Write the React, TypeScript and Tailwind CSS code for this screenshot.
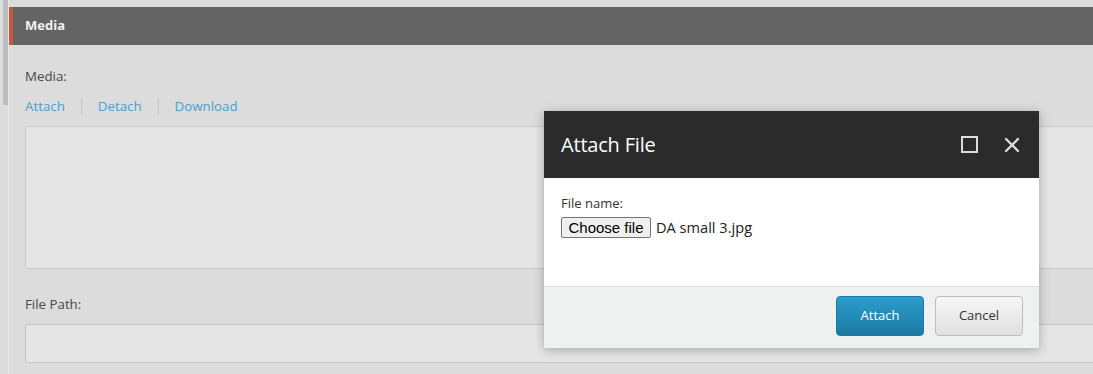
import { X } from 'lucide-react'

const FONT = '[font-family:"Open_Sans",Roboto,sans-serif]'

function Modal() {
  return (
    <div className={`absolute left-[544px] top-[111px] w-[495px] h-[237px] flex flex-col bg-white shadow-[0_2px_10px_rgba(0,0,0,0.28)] ${FONT}`}>
      {/* title bar */}
      <div className="h-[67px] shrink-0 flex items-center justify-between bg-[#2b2b2b] pl-[17px] pr-[18px]">
        <div className="text-[20px] leading-none text-white tracking-[-0.2px]">Attach File</div>
        <div className="flex items-center gap-[22px]">
          <div className="w-[17px] h-[17px] border-2 border-[#dcdcdc]" />
          <X size={24} strokeWidth={2.3} className="text-[#dcdcdc] -mr-[3px]" />
        </div>
      </div>

      {/* body */}
      <div className="flex-1 px-[17px] pt-[16px]">
        <div className="text-[13px] leading-[18px] text-[#333]">File name:</div>
        <div className="flex items-center mt-[5px]">
          <button className="h-[21px] w-[90px] rounded-[2px] border border-[#767676] bg-[#efefef] text-[15px] leading-none text-black [font-family:'Liberation_Sans',Arial,sans-serif]">
            Choose file
          </button>
          <span className="ml-[5px] text-[14.6px] leading-none text-[#222]">DA small 3.jpg</span>
        </div>
      </div>

      {/* footer */}
      <div className="h-[62px] shrink-0 flex items-start justify-end gap-[11px] border-t border-[#dedede] bg-[#eff0f0] pt-[9px] pr-[16px]">
        <button className="h-[40px] w-[88px] rounded-[4px] border border-[#1b7aa5] bg-gradient-to-b from-[#2a9dcc] to-[#1c7aa3] text-[13px] text-white">
          Attach
        </button>
        <button className="h-[40px] w-[88px] rounded-[4px] border border-[#bdbdbd] bg-gradient-to-b from-[#f6f6f6] to-[#e0e0e0] text-[13px] text-[#333]">
          Cancel
        </button>
      </div>
    </div>
  )
}

export default function App() {
  return (
    <div className={`relative w-[1093px] h-[374px] overflow-hidden bg-[#dcdcdc] ${FONT}`}>
      <div className="flex h-full">
        {/* left gutter / scrollbar */}
        <div className="flex w-[9px] shrink-0">
          <div className="w-[3px]" />
          <div className="w-[5px] h-[105px] bg-[#bdbdbd]" />
          <div className="w-[1px] bg-[#e6e6e6]" />
        </div>

        <div className="flex-1 flex flex-col pt-[7px]">
          {/* section header */}
          <div className="h-[38px] shrink-0 flex items-center border-l-4 border-[#c5563f] bg-[#646464] pl-[12px]">
            <span className="text-[13px] font-bold text-[#f2f2f2]">Media</span>
          </div>

          <div className="flex flex-col pl-[16px] -mr-[12px]">
            <div className="mt-[22px] text-[13.3px] leading-[18px] text-[#4a4a4a]">Media:</div>

            <div className="mt-[12px] flex items-center text-[13.3px] leading-[18px] text-[#44a2d0]">
              <span>Attach</span>
              <span className="mx-[16px] h-[18px] w-px bg-[#c8c8c8]" />
              <span>Detach</span>
              <span className="mx-[16px] h-[18px] w-px bg-[#c8c8c8]" />
              <span>Download</span>
            </div>

            <div className="mt-[11px] h-[143px] rounded-[2px] border border-[#cacaca] bg-[#e5e5e5]" />

            <div className="mt-[26px] text-[13.3px] leading-[18px] text-[#4a4a4a]">File Path:</div>

            <div className="mt-[11px] h-[39px] rounded-[2px] border border-[#c6c6c6] bg-[#e5e5e5]" />
          </div>
        </div>
      </div>

      <Modal />
    </div>
  )
}
